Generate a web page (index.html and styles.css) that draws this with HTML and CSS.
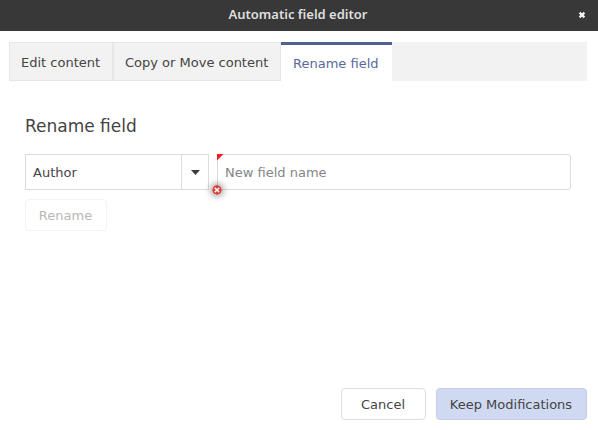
FILE: index.html
```html
<!DOCTYPE html>
<html lang="en">
<head>
<meta charset="utf-8">
<title>Automatic field editor</title>
<link rel="stylesheet" href="styles.css">
</head>
<body>
<div class="dialog">
  <header class="titlebar">
    <span class="title">Automatic field editor</span>
    <svg class="close" width="8" height="8" viewBox="0 0 8 8"><path d="M1.6 1.6 6.4 6.4M6.4 1.6 1.6 6.4"/></svg>
  </header>
  <nav class="tabs">
    <div class="tab tab-edit">Edit content</div>
    <div class="tab tab-copy">Copy or Move content</div>
    <div class="tab active">Rename field</div>
  </nav>
  <main class="content">
    <h1>Rename field</h1>
    <div class="fields">
      <div class="combo">
        <span class="value">Author</span>
        <span class="arrow"><svg width="9" height="5" viewBox="0 0 9 5"><path d="M0 0h9L4.5 5z"/></svg></span>
      </div>
      <div class="input">
        <span>New field name</span>
        <svg class="required" width="7" height="7" viewBox="0 0 7 7"><path d="M0 0h6.5L0 6.5z"/></svg>
        <svg class="error" width="10" height="10" viewBox="0 0 10 10"><circle cx="5" cy="5" r="4.9"/><path d="M2.7 2.7 7.3 7.3M7.3 2.7 2.7 7.3"/></svg>
      </div>
    </div>
    <div class="button rename">Rename</div>
  </main>
  <footer class="actions">
    <div class="button cancel">Cancel</div>
    <div class="button keep">Keep Modifications</div>
  </footer>
</div>
</body>
</html>
```
FILE: styles.css
```css
* { box-sizing: border-box; }
body {
  margin: 0;
  background: #fff;
  color: #444;
  font: 13px/16px "DejaVu Sans", sans-serif;
}
.dialog {
  width: 598px;
  height: 430px;
  display: flex;
  flex-direction: column;
  overflow: hidden;
  white-space: nowrap;
}
.titlebar {
  height: 31px;
  flex: none;
  display: flex;
  align-items: center;
  justify-content: center;
  position: relative;
  background: #383838;
  color: #dfdfdf;
  padding: 0 2px 4px 0;
}
.title {
  font: 600 13px/18px "Noto Sans", "Open Sans", sans-serif;
}
.close {
  position: absolute;
  right: 12px;
  top: 11px;
  fill: none;
  stroke: #f4f4f4;
  stroke-width: 2.2;
}
.tabs {
  height: 39px;
  flex: none;
  margin: 11px 11px 0 9px;
  display: flex;
  background: #f2f2f2;
}
.tab {
  border: 1px solid #e6e6e6;
  padding: 12px 0 0 11px;
}
.tab-edit { width: 104px; }
.tab-copy { width: 168px; }
.tab.active {
  width: 111px;
  background: #fff;
  border: 0;
  border-top: 3px solid #50618f;
  color: #5a6799;
  padding: 11px 0 0 12px;
}
.content {
  flex: 1;
  padding: 35px 27px 0 25px;
}
h1 {
  margin: 0 0 17px;
  font-size: 17px;
  line-height: 21px;
  font-weight: 400;
}
.fields {
  display: flex;
  gap: 8px;
  height: 36px;
}
.combo {
  width: 184px;
  display: flex;
  border: 1px solid #dcdcdc;
}
.value {
  flex: 1;
  padding: 10px 0 0 7px;
}
.arrow {
  width: 27px;
  display: flex;
  align-items: center;
  justify-content: center;
  border-left: 1px solid #dcdcdc;
}
.arrow svg { fill: #3c3c3c; }
.input {
  flex: 1;
  position: relative;
  border: 1px solid #dcdcdc;
  border-radius: 3px;
  padding: 10px 7px 0;
  color: #858585;
}
.required {
  position: absolute;
  left: -1px;
  top: -1px;
  fill: #f51b26;
}
.error {
  position: absolute;
  left: -6px;
  top: 30px;
  border-radius: 50%;
  box-shadow: 0 0 7px 1px rgba(0, 0, 0, .45);
}
.error circle { fill: #d9413f; }
.error path {
  stroke: #fff;
  stroke-width: 1.4;
}
.button {
  height: 32px;
  display: flex;
  align-items: center;
  justify-content: center;
  border: 1px solid #e0e0e0;
  border-radius: 4px;
  padding: 2px 1px 0 0;
}
.rename {
  width: 82px;
  margin-top: 9px;
  border-color: #f3f3f3;
  color: #b8b8b8;
}
.actions {
  flex: none;
  display: flex;
  justify-content: flex-end;
  gap: 10px;
  padding: 0 11px 10px 0;
}
.cancel { width: 85px; }
.keep {
  width: 151px;
  background: #cfd9f2;
  border-color: #c4cee9;
}
```
